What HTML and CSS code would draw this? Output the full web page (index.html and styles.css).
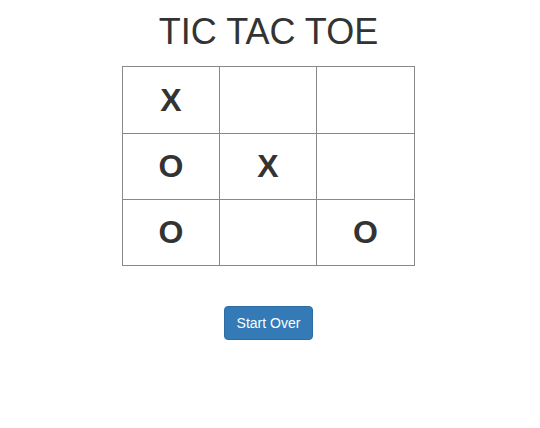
FILE: index.html
```html
<!DOCTYPE html>
<html>
<head>
<meta charset="utf-8">
<link rel="stylesheet" href="styles.css">
</head>
<body>
<div class="page">
  <h1 class="title">TIC TAC TOE</h1>
  <table class="board">
    <tr><td>X</td><td></td><td></td></tr>
    <tr><td>O</td><td>X</td><td></td></tr>
    <tr><td>O</td><td></td><td>O</td></tr>
  </table>
  <button class="btn">Start Over</button>
</div>
</body>
</html>
```
FILE: styles.css
```css
html, body {
  margin: 0;
  padding: 0;
  background: #fff;
}
body {
  font-family: "Liberation Sans", Arial, sans-serif;
  color: #333;
}
.page {
  display: flex;
  flex-direction: column;
  align-items: center;
  padding-top: 12px;
  padding-right: 3px;
}
.title {
  margin: 0;
  font-size: 36px;
  font-weight: 400;
  line-height: 1.1;
  height: 54px;
}
.board {
  border-collapse: collapse;
}
.board td {
  border: 1px solid #888;
  width: 96px;
  height: 65px;
  padding: 0;
  text-align: center;
  vertical-align: middle;
  font-size: 32px;
  font-weight: 700;
}
.board tr:first-child td {
  height: 66px;
}
.board td:last-child {
  width: 97px;
}
.btn {
  margin-top: 40px;
  font-family: "Liberation Sans", Arial, sans-serif;
  font-size: 14px;
  line-height: 20px;
  padding: 6px 12px;
  color: #fff;
  background: #337ab7;
  border: 1px solid #2e6da4;
  border-radius: 4px;
}
```
